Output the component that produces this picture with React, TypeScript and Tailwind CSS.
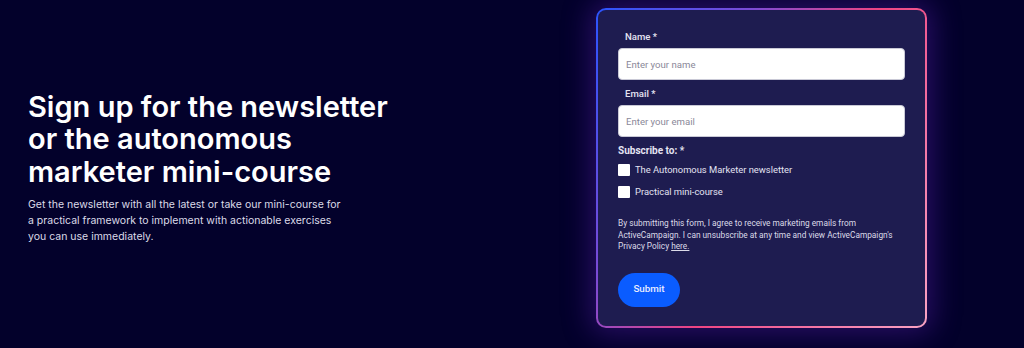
import { useState } from 'react'

const fieldLabel = 'block pl-[7px] text-[9.6px] leading-[16px] font-medium text-[#e4e3f2]'
const fieldInput =
  'block w-full h-[32px] rounded-[4px] bg-white border border-[#c9c9d6] px-[7px] text-[9.6px] text-[#2a2a3a] placeholder:text-[#8a8899] outline-none'

function Check({ label }: { label: string }) {
  const [on, setOn] = useState(false)
  return (
    <label className="flex items-center gap-[5px] h-[16px] cursor-pointer">
      <input
        type="checkbox"
        checked={on}
        onChange={() => setOn(!on)}
        className="appearance-none w-[12px] h-[12px] bg-white rounded-[1px] checked:bg-[#0a5cff]"
      />
      <span className="text-[9.4px] text-[#e4e3f2]">{label}</span>
    </label>
  )
}

export default function App() {
  return (
    <div className="w-[1024px] h-[348px] pb-[12px] bg-[#03012b] flex items-center font-['Inter',sans-serif] overflow-hidden">
      <div className="w-[596px] pl-[28px] shrink-0">
        <h1 className="text-[29px] leading-[32.5px] font-semibold text-white">
          Sign up for the newsletter
          <br />
          or the autonomous
          <br />
          marketer mini-course
        </h1>
        <p className="mt-[9px] text-[10.5px] leading-[16px] text-[#dcdbe8]">
          Get the newsletter with all the latest or take our mini-course for
          <br />
          a practical framework to implement with actionable exercises
          <br />
          you can use immediately.
        </p>
      </div>

      <div className="w-[331px] h-[320px] shrink-0 rounded-[10px] p-[2px] bg-[linear-gradient(120deg,#2b55ff_0%,#7a4bd6_30%,#ee4482_55%,#f9a3c4_100%)] shadow-[0_0_28px_6px_rgba(98,36,190,0.38)]">
        <form
          className="h-full rounded-[8px] bg-[#1e1c50] pt-[19px] px-[20px] font-['Roboto',sans-serif]"
          onSubmit={e => e.preventDefault()}
        >
          <label className={fieldLabel}>Name *</label>
          <input className={`${fieldInput} mt-[3px]`} placeholder="Enter your name" />

          <label className={`${fieldLabel} mt-[6px]`}>Email *</label>
          <input className={`${fieldInput} mt-[3px]`} placeholder="Enter your email" />

          <div className="mt-[6px] text-[10px] leading-[16px] font-bold text-[#e4e3f2]">
            Subscribe to: *
          </div>
          <div className="mt-[3px] flex flex-col gap-[6px]">
            <Check label="The Autonomous Marketer newsletter" />
            <Check label="Practical mini-course" />
          </div>

          <p className="mt-[18px] text-[8.3px] leading-[11.6px] whitespace-nowrap text-[#dcdbe8]">
            By submitting this form, I agree to receive marketing emails from
            <br />
            ActiveCampaign. I can unsubscribe at any time and view ActiveCampaign's
            <br />
            Privacy Policy <a className="underline">here.</a>
          </p>

          <button
            type="submit"
            className="mt-[20px] w-[62px] h-[34px] rounded-full bg-[#0a5cff] text-[9.8px] font-medium text-[#e8ecff]"
          >
            Submit
          </button>
        </form>
      </div>
    </div>
  )
}
